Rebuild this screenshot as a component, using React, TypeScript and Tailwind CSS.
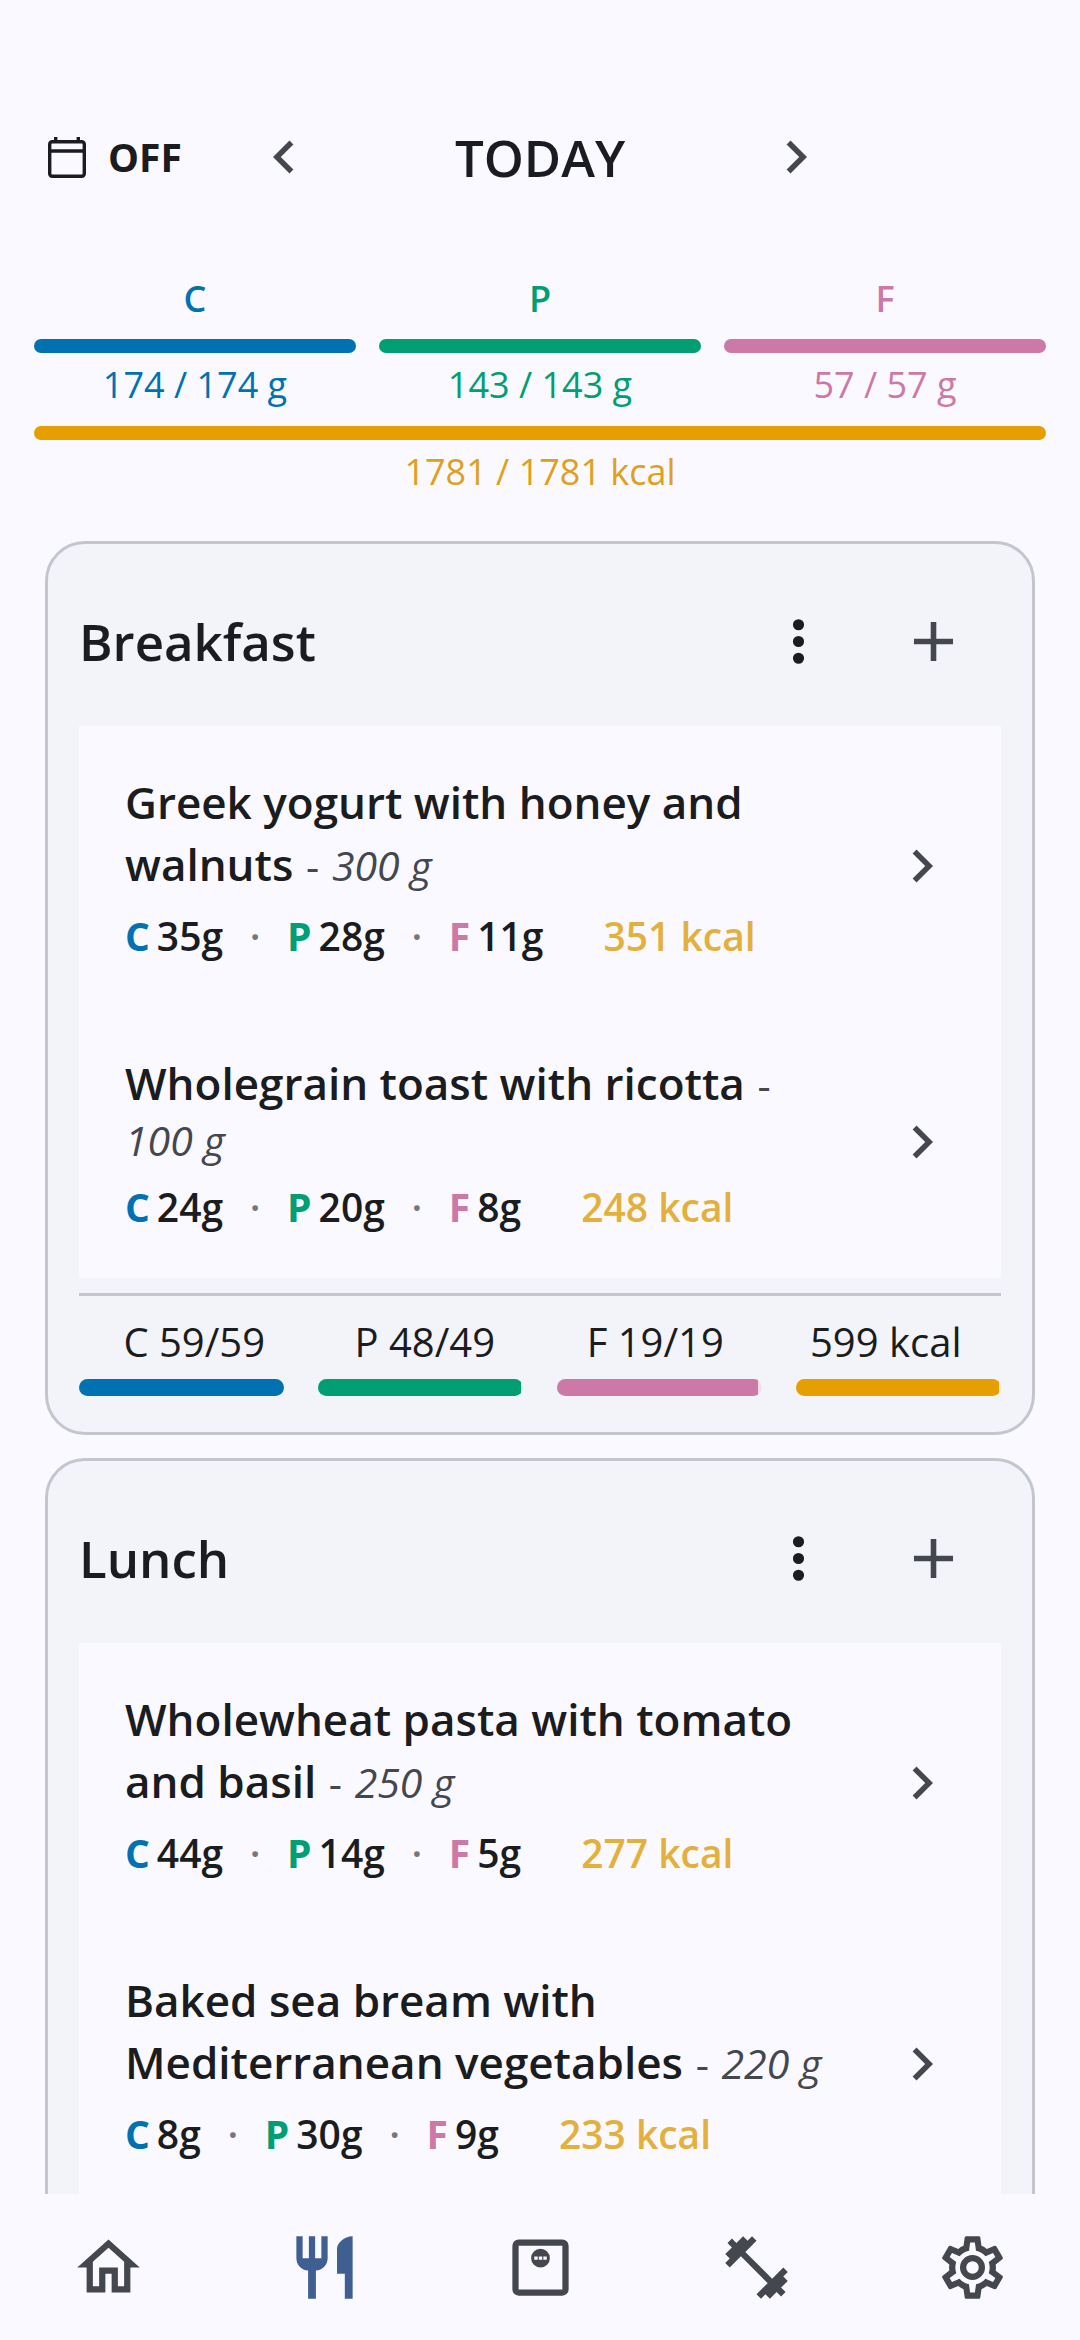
import { Fragment, useState } from 'react'
import clsx from 'clsx'

type Food = {
  name: string
  amount: string
  carbs: number
  protein: number
  fat: number
  kcal: number
}

type Total = { label: string; percent: number; color: string; track: string }

type Meal = { title: string; foods: Food[]; totals?: Total[] }

const MACROS = [
  { label: 'C', value: '174 / 174 g', text: 'text-[#0072b2]', bar: 'bg-[#0072b2]' },
  { label: 'P', value: '143 / 143 g', text: 'text-[#009e73]', bar: 'bg-[#009e73]' },
  { label: 'F', value: '57 / 57 g', text: 'text-[#cc79a7]', bar: 'bg-[#cc79a7]' },
]

const MEALS: Meal[] = [
  {
    title: 'Breakfast',
    foods: [
      { name: 'Greek yogurt with honey and walnuts', amount: '300 g', carbs: 35, protein: 28, fat: 11, kcal: 351 },
      { name: 'Wholegrain toast with ricotta', amount: '100 g', carbs: 24, protein: 20, fat: 8, kcal: 248 },
    ],
    totals: [
      { label: 'C 59/59', percent: 100, color: 'bg-[#0072b2]', track: 'bg-[#d3e6f4]' },
      { label: 'P 48/49', percent: 99, color: 'bg-[#009e73]', track: 'bg-[#cdf0e6]' },
      { label: 'F 19/19', percent: 98, color: 'bg-[#cc79a7]', track: 'bg-[#f4dfec]' },
      { label: '599 kcal', percent: 99, color: 'bg-[#e69f00]', track: 'bg-[#f8e8c6]' },
    ],
  },
  {
    title: 'Lunch',
    foods: [
      { name: 'Wholewheat pasta with tomato and basil', amount: '250 g', carbs: 44, protein: 14, fat: 5, kcal: 277 },
      { name: 'Baked sea bream with Mediterranean vegetables', amount: '220 g', carbs: 8, protein: 30, fat: 9, kcal: 233 },
    ],
  },
]

const ICONS = {
  left: 'M15.41,16.58L10.83,12L15.41,7.41L14,6L8,12L14,18L15.41,16.58Z',
  right: 'M8.59,16.58L13.17,12L8.59,7.41L10,6L16,12L10,18L8.59,16.58Z',
  plus: 'M19,13H13V19H11V13H5V11H11V5H13V11H19V13Z',
  dots: 'M12,16A2,2 0 0,1 14,18A2,2 0 0,1 12,20A2,2 0 0,1 10,18A2,2 0 0,1 12,16M12,10A2,2 0 0,1 14,12A2,2 0 0,1 12,14A2,2 0 0,1 10,12A2,2 0 0,1 12,10M12,4A2,2 0 0,1 14,6A2,2 0 0,1 12,8A2,2 0 0,1 10,6A2,2 0 0,1 12,4Z',
  home: 'M12 5.69L17 10.19V18H15V12H9V18H7V10.19L12 5.69M12 3L2 12H5V20H11V14H13V20H19V12H22L12 3Z',
  food: 'M11,9H9V2H7V9H5V2H3V9C3,11.12 4.66,12.84 6.75,12.97V22H9.25V12.97C11.34,12.84 13,11.12 13,9V2H11V9M16,6V14H18.5V22H21V2C18.24,2 16,4.24 16,6Z',
  scale:
    'M5,3H19A2,2 0 0,1 21,5V19A2,2 0 0,1 19,21H5A2,2 0 0,1 3,19V5A2,2 0 0,1 5,3M5,5V19H19V5H5M12,6A3,3 0 0,1 15,9A3,3 0 0,1 12,12A3,3 0 0,1 9,9A3,3 0 0,1 12,6M10,8.45V9.55H11.1V8.45H10M11.45,8.45V9.55H12.55V8.45H11.45M12.9,8.45V9.55H14V8.45H12.9Z',
  dumbbell:
    'M20.57,14.86L22,13.43L20.57,12L17,15.57L8.43,7L12,3.43L10.57,2L9.14,3.43L7.71,2L5.57,4.14L4.14,2.71L2.71,4.14L4.14,5.57L2,7.71L3.43,9.14L2,10.57L3.43,12L7,8.43L15.57,17L12,20.57L13.43,22L14.86,20.57L16.29,22L18.43,19.86L19.86,21.29L21.29,19.86L19.86,18.43L22,16.29L20.57,14.86Z',
  cog: 'M12,8A4,4 0 0,1 16,12A4,4 0 0,1 12,16A4,4 0 0,1 8,12A4,4 0 0,1 12,8M12,10A2,2 0 0,0 10,12A2,2 0 0,0 12,14A2,2 0 0,0 14,12A2,2 0 0,0 12,10M10,22C9.75,22 9.54,21.82 9.5,21.58L9.13,18.93C8.5,18.68 7.96,18.34 7.44,17.94L4.95,18.95C4.73,19.03 4.46,18.95 4.34,18.73L2.34,15.27C2.21,15.05 2.27,14.78 2.46,14.63L4.57,12.97L4.5,12L4.57,11L2.46,9.37C2.27,9.22 2.21,8.95 2.34,8.73L4.34,5.27C4.46,5.05 4.73,4.96 4.95,5.05L7.44,6.05C7.96,5.66 8.5,5.32 9.13,5.07L9.5,2.42C9.54,2.18 9.75,2 10,2H14C14.25,2 14.46,2.18 14.5,2.42L14.87,5.07C15.5,5.32 16.04,5.66 16.56,6.05L19.05,5.05C19.27,4.96 19.54,5.05 19.66,5.27L21.66,8.73C21.79,8.95 21.73,9.22 21.54,9.37L19.43,11L19.5,12L19.43,13L21.54,14.63C21.73,14.78 21.79,15.05 21.66,15.27L19.66,18.73C19.54,18.95 19.27,19.04 19.05,18.95L16.56,17.95C16.04,18.34 15.5,18.68 14.87,18.93L14.5,21.58C14.46,21.82 14.25,22 14,22H10M11.25,4L10.88,6.61C9.68,6.86 8.62,7.5 7.85,8.39L5.44,7.35L4.69,8.65L6.8,10.2C6.4,11.37 6.4,12.64 6.8,13.8L4.68,15.36L5.43,16.66L7.86,15.62C8.63,16.5 9.68,17.14 10.87,17.38L11.24,20H12.76L13.13,17.39C14.32,17.14 15.37,16.5 16.14,15.62L18.57,16.66L19.32,15.36L17.2,13.81C17.6,12.64 17.6,11.37 17.2,10.2L19.31,8.65L18.56,7.35L16.15,8.39C15.38,7.5 14.32,6.86 13.12,6.62L12.75,4H11.25Z',
}

type IconName = keyof typeof ICONS

const TABS: { name: string; icon: IconName }[] = [
  { name: 'Home', icon: 'home' },
  { name: 'Meals', icon: 'food' },
  { name: 'Weight', icon: 'scale' },
  { name: 'Training', icon: 'dumbbell' },
  { name: 'Settings', icon: 'cog' },
]

function Icon({ name, className }: { name: IconName; className: string }) {
  return (
    <svg viewBox="0 0 24 24" fill="currentColor" fillRule="evenodd" className={className} aria-hidden="true">
      <path d={ICONS[name]} />
    </svg>
  )
}

function CalendarIcon() {
  return (
    <svg viewBox="0 0 38 42" fill="none" stroke="currentColor" strokeWidth="3.4" className="h-[42px] w-[38px]" aria-hidden="true">
      <rect x="1.7" y="5.7" width="34.6" height="34.6" rx="2.5" />
      <path d="M1.5 15H36.5M7.7 1V5M30.3 1V5" />
    </svg>
  )
}

function Header() {
  return (
    <header className="mt-[107px] grid h-[100px] grid-cols-[1fr_auto_1fr] items-center text-[#1a1c20]">
      <button type="button" className="flex items-center gap-[22px] pl-12 text-[39px] font-bold">
        <CalendarIcon />
        OFF
      </button>
      <div className="flex w-[592px] items-center justify-between">
        <button type="button" aria-label="Previous day" className="flex w-20 justify-center text-[#44474e]">
          <Icon name="left" className="size-[66px]" />
        </button>
        <h1 className="text-[51px] font-semibold">TODAY</h1>
        <button type="button" aria-label="Next day" className="flex w-20 justify-center text-[#44474e]">
          <Icon name="right" className="size-[66px]" />
        </button>
      </div>
    </header>
  )
}

function DaySummary() {
  return (
    <section className="mt-[68px] px-[34px] text-center text-[36px] leading-[48px]">
      <div className="grid grid-cols-3 gap-[23px]">
        {MACROS.map((macro) => (
          <div key={macro.label} className={macro.text}>
            <p className="font-semibold">{macro.label}</p>
            <div className={clsx('mt-4 mb-2 h-[14px] rounded-full', macro.bar)} />
            <p>{macro.value}</p>
          </div>
        ))}
      </div>
      <div className="mt-[17px] mb-2 h-[14px] rounded-full bg-[#e69f00]" />
      <p className="text-[#dfa020]">1781 / 1781 kcal</p>
    </section>
  )
}

function FoodRow({ food }: { food: Food }) {
  const parts = [
    { letter: 'C', grams: food.carbs, color: 'text-[#0072b2]' },
    { letter: 'P', grams: food.protein, color: 'text-[#009e73]' },
    { letter: 'F', grams: food.fat, color: 'text-[#cc79a7]' },
  ]

  return (
    <li className="flex items-center pt-[45px] pr-6 pb-[46px] pl-[46px]">
      <div className="flex-1">
        <p className="text-[41px] leading-[52px] text-[#44474e]">
          <span className="text-[44px] leading-[62px] font-semibold text-[#1a1c20]">{food.name}</span>{' '}
          <span className="mx-0.5">-</span>{' '}
          <em className="whitespace-nowrap">{food.amount}</em>
        </p>
        <p className="mt-4 flex text-[39px] leading-[50px] font-semibold text-[#1a1c20]">
          {parts.map((part, i) => (
            <Fragment key={part.letter}>
              {i > 0 && <span className="w-16 text-center text-[#74777f]">·</span>}
              <span className="flex gap-[7px]">
                <b className={clsx('font-bold', part.color)}>{part.letter}</b>
                {part.grams}g
              </span>
            </Fragment>
          ))}
          <span className="ml-[60px] text-[#e4b03c]">{food.kcal} kcal</span>
        </p>
      </div>
      <button type="button" aria-label={`Open ${food.name}`} className="flex w-[110px] justify-center text-[#44474e]">
        <Icon name="right" className="size-[66px]" />
      </button>
    </li>
  )
}

function MealCard({ meal }: { meal: Meal }) {
  return (
    <section className="rounded-[40px] border-3 border-[#c4c6cd] bg-[#f3f4f9] px-[31px] pb-9">
      <div className="flex h-[182px] items-center gap-[25px] pt-3 pr-[13px] text-[#1a1c20]">
        <h2 className="flex-1 text-[51px] font-semibold">{meal.title}</h2>
        <button type="button" aria-label={`${meal.title} options`} className="flex w-[110px] justify-center">
          <Icon name="dots" className="size-[67px]" />
        </button>
        <button type="button" aria-label={`Add to ${meal.title}`} className="flex w-[110px] justify-center text-[#44474e]">
          <Icon name="plus" className="size-[67px]" />
        </button>
      </div>
      <ul className="bg-[#faf9ff]">
        {meal.foods.map((food) => (
          <FoodRow key={food.name} food={food} />
        ))}
      </ul>
      {meal.totals && (
        <div className="mt-[15px] border-t-3 border-[#c4c6d0] pt-5">
          <div className="grid grid-cols-4 text-center text-[40px] leading-[52px] text-[#1a1c20]">
            {meal.totals.map((total) => (
              <p key={total.label}>{total.label}</p>
            ))}
          </div>
          <div className="mt-[11px] grid grid-cols-4 gap-[34px]">
            {meal.totals.map((total) => (
              <div key={total.label} className={clsx('h-[17px] overflow-hidden rounded-full', total.track)}>
                <div className={clsx('h-full', total.color)} style={{ width: `${total.percent}%` }} />
              </div>
            ))}
          </div>
        </div>
      )}
    </section>
  )
}

export default function App() {
  const [tab, setTab] = useState('Meals')

  return (
    <div className="flex h-screen flex-col bg-[#faf9ff] font-['Open_Sans',sans-serif]">
      <main className="min-h-0 flex-1 overflow-y-auto [scrollbar-width:none]">
        <Header />
        <DaySummary />
        <div className="mt-[45px] flex flex-col gap-[23px] px-[45px] pb-6">
          {MEALS.map((meal) => (
            <MealCard key={meal.title} meal={meal} />
          ))}
        </div>
      </main>
      <nav className="grid h-[146px] shrink-0 grid-cols-5 bg-[#faf9ff]">
        {TABS.map(({ name, icon }) => (
          <button
            key={name}
            type="button"
            aria-label={name}
            onClick={() => setTab(name)}
            className={clsx('flex items-center justify-center', tab === name ? 'text-[#3f5f90]' : 'text-[#44474e]')}
          >
            <Icon name={icon} className="size-[75px]" />
          </button>
        ))}
      </nav>
    </div>
  )
}
